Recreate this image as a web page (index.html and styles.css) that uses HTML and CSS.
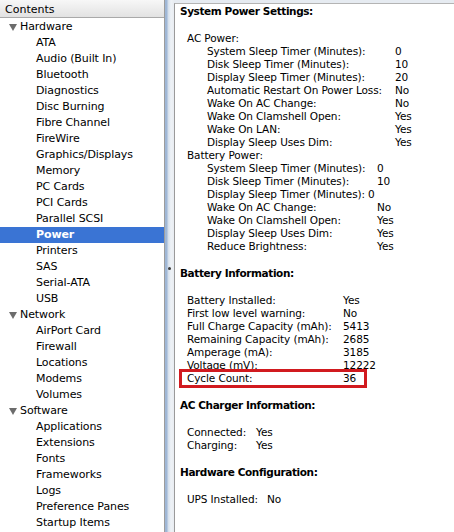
FILE: index.html
```html
<!DOCTYPE html>
<html lang="en">
<head>
    <meta charset="UTF-8">
    <title>System Profiler - Power</title>
    <link rel="stylesheet" href="styles.css">
</head>
<body>
    <div class="window">
        <aside class="sidebar">
            <div class="sidebar-head">Contents</div>
            <ul class="tree">
                <li class="group"><span class="twisty"></span>Hardware</li>
                <li>ATA</li>
                <li>Audio (Built In)</li>
                <li>Bluetooth</li>
                <li>Diagnostics</li>
                <li>Disc Burning</li>
                <li>Fibre Channel</li>
                <li>FireWire</li>
                <li>Graphics/Displays</li>
                <li>Memory</li>
                <li>PC Cards</li>
                <li>PCI Cards</li>
                <li>Parallel SCSI</li>
                <li class="selected">Power</li>
                <li>Printers</li>
                <li>SAS</li>
                <li>Serial-ATA</li>
                <li>USB</li>
                <li class="group"><span class="twisty"></span>Network</li>
                <li>AirPort Card</li>
                <li>Firewall</li>
                <li>Locations</li>
                <li>Modems</li>
                <li>Volumes</li>
                <li class="group"><span class="twisty"></span>Software</li>
                <li>Applications</li>
                <li>Extensions</li>
                <li>Fonts</li>
                <li>Frameworks</li>
                <li>Logs</li>
                <li>Preference Panes</li>
                <li>Startup Items</li>
            </ul>
        </aside>

        <div class="splitter"><span class="grip"></span></div>

        <main class="report">
            <section class="block">
                <h2>System Power Settings:</h2>
                <div class="sub">AC Power:</div>
                <div class="rows ac">
                    <div class="row"><span class="k">System Sleep Timer (Minutes):</span><span>0</span></div>
                    <div class="row"><span class="k">Disk Sleep Timer (Minutes):</span><span>10</span></div>
                    <div class="row"><span class="k">Display Sleep Timer (Minutes):</span><span>20</span></div>
                    <div class="row"><span class="k">Automatic Restart On Power Loss:</span><span>No</span></div>
                    <div class="row"><span class="k">Wake On AC Change:</span><span>No</span></div>
                    <div class="row"><span class="k">Wake On Clamshell Open:</span><span>Yes</span></div>
                    <div class="row"><span class="k">Wake On LAN:</span><span>Yes</span></div>
                    <div class="row"><span class="k">Display Sleep Uses Dim:</span><span>Yes</span></div>
                </div>
                <div class="sub">Battery Power:</div>
                <div class="rows battery">
                    <div class="row"><span class="k">System Sleep Timer (Minutes):</span><span>0</span></div>
                    <div class="row"><span class="k">Disk Sleep Timer (Minutes):</span><span>10</span></div>
                    <div class="row"><span class="k short">Display Sleep Timer (Minutes):</span><span>0</span></div>
                    <div class="row"><span class="k">Wake On AC Change:</span><span>No</span></div>
                    <div class="row"><span class="k">Wake On Clamshell Open:</span><span>Yes</span></div>
                    <div class="row"><span class="k">Display Sleep Uses Dim:</span><span>Yes</span></div>
                    <div class="row"><span class="k">Reduce Brightness:</span><span>Yes</span></div>
                </div>
            </section>

            <section class="block">
                <h2>Battery Information:</h2>
                <div class="rows info">
                    <div class="row"><span class="k">Battery Installed:</span><span>Yes</span></div>
                    <div class="row"><span class="k">First low level warning:</span><span>No</span></div>
                    <div class="row"><span class="k">Full Charge Capacity (mAh):</span><span>5413</span></div>
                    <div class="row"><span class="k">Remaining Capacity (mAh):</span><span>2685</span></div>
                    <div class="row"><span class="k">Amperage (mA):</span><span>3185</span></div>
                    <div class="row"><span class="k">Voltage (mV):</span><span>12222</span></div>
                    <div class="row marked"><span class="k">Cycle Count:</span><span>36</span></div>
                </div>
            </section>

            <section class="block">
                <h2>AC Charger Information:</h2>
                <div class="rows charger">
                    <div class="row"><span class="k">Connected:</span><span>Yes</span></div>
                    <div class="row"><span class="k">Charging:</span><span>Yes</span></div>
                </div>
            </section>

            <section class="block">
                <h2>Hardware Configuration:</h2>
                <div class="rows ups">
                    <div class="row"><span class="k">UPS Installed:</span><span>No</span></div>
                </div>
            </section>
        </main>
    </div>
</body>
</html>
```

FILE: styles.css
```css
body {
    margin: 0;
    padding: 0;
    font-family: "DejaVu Sans", "Lucida Grande", sans-serif;
    font-size: 11px;
    color: #000;
    background-color: #e6ebf1;
}
.window {
    display: flex;
    height: 532px;
    overflow: hidden;
}

/* left source list */
.sidebar {
    width: 164px;
    flex-shrink: 0;
    background-color: #fff;
    border-right: 1px solid #9c9c9c;
}
.sidebar-head {
    height: 17px;
    line-height: 19px;
    padding-left: 5px;
    background: linear-gradient(#f7f7f7, #e2e2e2);
    border-bottom: 1px solid #a9a9a9;
}
.tree {
    list-style: none;
    margin: 0;
    padding: 1px 0 0 0;
    letter-spacing: -0.1px;
}
.tree li {
    height: 16px;
    line-height: 16px;
    padding-left: 36px;
    white-space: nowrap;
}
.tree li.group {
    padding-left: 9px;
    display: flex;
    align-items: center;
}
.twisty {
    width: 0;
    height: 0;
    border-left: 4px solid transparent;
    border-right: 4px solid transparent;
    border-top: 7px solid #6c6c6c;
    margin-right: 3px; /* text starts at 20px */
}
.tree li.selected {
    background-color: #3a74d4;
    color: #fff;
    font-weight: bold;
}

/* split view divider */
.splitter {
    width: 9px;
    flex-shrink: 0;
    display: flex;
    align-items: center;
    justify-content: center;
    background: linear-gradient(to right, #9fb7d6 0, #9fb7d6 2px, #d3deeb 3px, #eef2f6 6px, #e8ecf1 9px);
}
.grip {
    width: 3px;
    height: 3px;
    border-radius: 50%;
    background-color: #3b3b3b;
    margin-top: 4px;
}

/* right report pane */
.report {
    flex: 1;
    margin-top: 3px;
    padding: 1px 0 0 5px;
    background-color: #fff;
    border-left: 1px solid #9a9a9a;
    border-top: 1px solid #b4b4b4;
    font-size: 10.5px;
    letter-spacing: -0.1px;
    line-height: 13px;
}
.block {
    margin-bottom: 14px;
}
.block h2 {
    font-size: 10.5px;
    font-weight: bold;
    letter-spacing: -0.4px;
    margin: 0 0 14px 0;
    line-height: 13px;
}
.sub {
    padding-left: 7px;
}
.rows {
    padding-left: 27px;
}
.rows.info,
.rows.charger,
.rows.ups {
    padding-left: 7px;
}
.row {
    display: flex;
    white-space: nowrap;
}
.row .k {
    flex-shrink: 0;
}
.ac .k { width: 188px; }
.battery .k { width: 170px; }
.battery .k.short {
    width: auto;
    margin-right: 3px;
}
.info .k { width: 156px; }
.charger .k { width: 69px; }
.ups .k { width: 80px; }

/* red annotation box round Cycle Count */
.row.marked {
    position: relative;
}
.row.marked::after {
    content: "";
    position: absolute;
    left: -8px;
    top: -3px;
    width: 182px;
    height: 13px;
    border: 3px solid #d11a1f;
}
```
